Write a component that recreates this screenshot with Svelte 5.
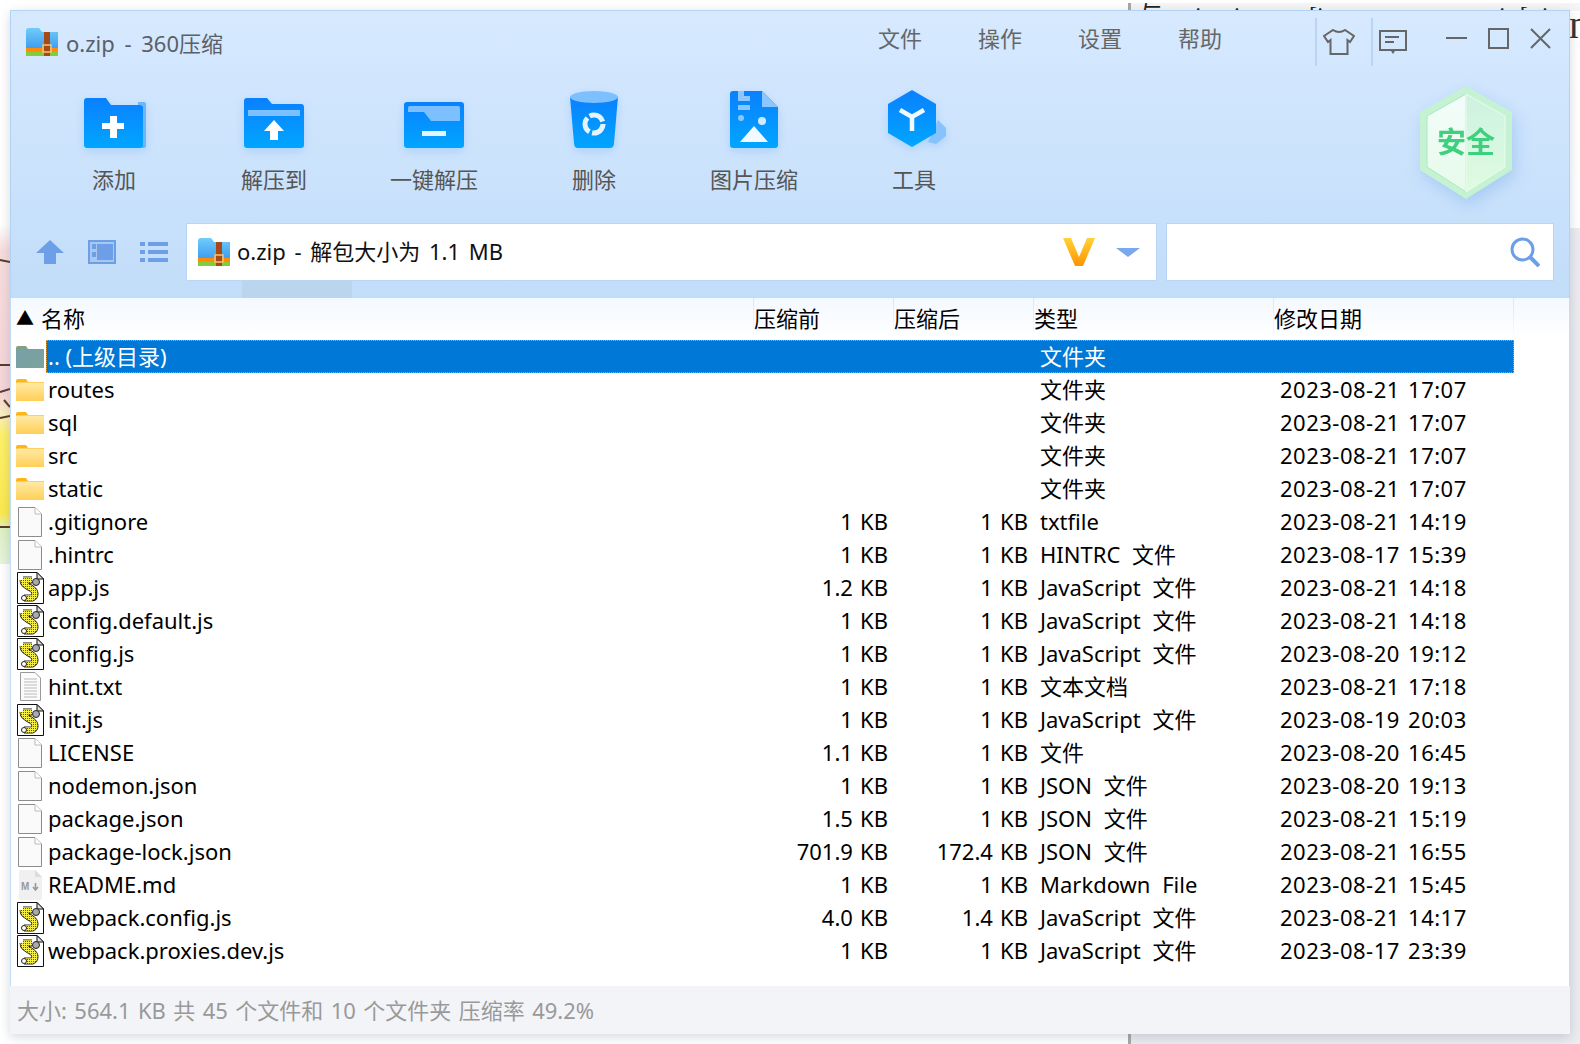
<script lang="ts">
	type Row = { kind: string; name: string; size?: string; packed?: string; type: string; date?: string };

	const rows: Row[] = [
		{ kind: 'up', name: '.. (上级目录)', type: '文件夹' },
		{ kind: 'folder', name: 'routes', type: '文件夹', date: '2023-08-21 17:07' },
		{ kind: 'folder', name: 'sql', type: '文件夹', date: '2023-08-21 17:07' },
		{ kind: 'folder', name: 'src', type: '文件夹', date: '2023-08-21 17:07' },
		{ kind: 'folder', name: 'static', type: '文件夹', date: '2023-08-21 17:07' },
		{ kind: 'file', name: '.gitignore', size: '1 KB', packed: '1 KB', type: 'txtfile', date: '2023-08-21 14:19' },
		{ kind: 'file', name: '.hintrc', size: '1 KB', packed: '1 KB', type: 'HINTRC 文件', date: '2023-08-17 15:39' },
		{ kind: 'js', name: 'app.js', size: '1.2 KB', packed: '1 KB', type: 'JavaScript 文件', date: '2023-08-21 14:18' },
		{ kind: 'js', name: 'config.default.js', size: '1 KB', packed: '1 KB', type: 'JavaScript 文件', date: '2023-08-21 14:18' },
		{ kind: 'js', name: 'config.js', size: '1 KB', packed: '1 KB', type: 'JavaScript 文件', date: '2023-08-20 19:12' },
		{ kind: 'txt', name: 'hint.txt', size: '1 KB', packed: '1 KB', type: '文本文档', date: '2023-08-21 17:18' },
		{ kind: 'js', name: 'init.js', size: '1 KB', packed: '1 KB', type: 'JavaScript 文件', date: '2023-08-19 20:03' },
		{ kind: 'file', name: 'LICENSE', size: '1.1 KB', packed: '1 KB', type: '文件', date: '2023-08-20 16:45' },
		{ kind: 'file', name: 'nodemon.json', size: '1 KB', packed: '1 KB', type: 'JSON 文件', date: '2023-08-20 19:13' },
		{ kind: 'file', name: 'package.json', size: '1.5 KB', packed: '1 KB', type: 'JSON 文件', date: '2023-08-21 15:19' },
		{ kind: 'file', name: 'package-lock.json', size: '701.9 KB', packed: '172.4 KB', type: 'JSON 文件', date: '2023-08-21 16:55' },
		{ kind: 'md', name: 'README.md', size: '1 KB', packed: '1 KB', type: 'Markdown File', date: '2023-08-21 15:45' },
		{ kind: 'js', name: 'webpack.config.js', size: '4.0 KB', packed: '1.4 KB', type: 'JavaScript 文件', date: '2023-08-21 14:17' },
		{ kind: 'js', name: 'webpack.proxies.dev.js', size: '1 KB', packed: '1 KB', type: 'JavaScript 文件', date: '2023-08-17 23:39' }
	];

	const tools = ['添加', '解压到', '一键解压', '删除', '图片压缩', '工具'];
</script>

{#snippet zipIcon()}
	<svg class="zip" viewBox="0 0 32 28" width="32" height="28">
		<path d="M0 3 Q0 0 3 0 H13 L16 4 H32 V20 H0 Z" fill="url(#zipBlue)" />
		<rect x="0" y="20" width="32" height="4" fill="#ff8a0c" />
		<rect x="0" y="24" width="32" height="4" fill="#84cc3a" />
		<rect x="18" y="4" width="6" height="24" fill="#a5481a" />
		<rect x="17" y="17" width="8" height="7" fill="none" stroke="#f5c66b" stroke-width="1.5" />
	</svg>
{/snippet}

{#snippet toolIcon(i: number)}
	{#if i === 0}
		<svg class="add" viewBox="0 0 62 50" width="62" height="50">
			<path d="M58 4 H60 Q62 4 62 6 V48 Q62 50 60 50 H54 V4 Z" fill="#6cb6fb" />
			<path d="M0 3 Q0 0 3 0 H22 L27 7 H55 Q59 7 59 10 V47 Q59 50 56 50 H3 Q0 50 0 47 Z" fill="url(#toolBlue)" />
			<path d="M26 25 V18 H33 V25 H40 V31 H33 V40 H26 V31 H18 V25 Z" fill="#fff" />
		</svg>
	{:else if i === 1}
		<svg viewBox="0 0 60 50" width="60" height="50">
			<path d="M0 3 Q0 0 3 0 H23 L28 6 H57 Q60 6 60 9 V47 Q60 50 57 50 H3 Q0 50 0 47 Z" fill="url(#toolBlue)" />
			<rect x="4" y="12" width="52" height="6" fill="#7cc0ff" />
			<path d="M30 22 L40 33 H34 V42 H26 V33 H20 Z" fill="#fff" />
		</svg>
	{:else if i === 2}
		<svg viewBox="0 0 60 50" width="60" height="50">
			<path d="M3 4 H57 Q60 4 60 7 V47 Q60 50 57 50 H3 Q0 50 0 47 V7 Q0 4 3 4 Z" fill="url(#toolBlue)" />
			<path d="M4 10 Q4 8 6 8 H54 Q56 8 56 10 V23 H27 L20 14 H4 Z" fill="#7cc0ff" />
			<rect x="18" y="33" width="24" height="5" fill="#e4f4ff" />
		</svg>
	{:else if i === 3}
		<svg class="bin" viewBox="0 0 48 58" width="48" height="58">
			<path d="M0 6 H48 L44 52 Q44 57 40 57 H8 Q4 57 4 52 Z" fill="url(#toolBlue)" />
			<ellipse cx="24" cy="6" rx="24" ry="6" fill="#7cc0ff" />
			<circle cx="24" cy="33" r="9" fill="none" stroke="#e4f4ff" stroke-width="5" stroke-dasharray="16 2.800" />
		</svg>
	{:else if i === 4}
		<svg viewBox="0 0 48 57" width="48" height="57">
			<path d="M3 0 H32 L48 16 V54 Q48 57 45 57 H3 Q0 57 0 54 V3 Q0 0 3 0 Z" fill="url(#toolBlue)" />
			<path d="M32 0 L48 16 H32 Z" fill="#8cc6ff" />
			<path d="M8 0 H14 V5 H20 V10 H14 V14 H20 V19 H8 V14 H14 V10 H8 V5 H8 Z" fill="#8cc6ff" />
			<circle cx="11" cy="27" r="3" fill="#8cc6ff" />
			<circle cx="32" cy="30" r="4" fill="#cfe9ff" />
			<path d="M10 51 L24 35 L38 51 Z" fill="#f2faff" />
		</svg>
	{:else}
		<svg class="cube" viewBox="0 0 58 58" width="58" height="58">
			<path d="M50 30 L58 38 V46 L48 54 L40 52 Z" fill="#86c2fb" />
			<path d="M24 0 L48 14 V43 L24 57 L0 43 V14 Z" fill="url(#toolBlue)" />
			<path d="M12 20 L24 27 L36 20 M24 27 V41" fill="none" stroke="#f2faff" stroke-width="4.5" />
		</svg>
	{/if}
{/snippet}

{#snippet fileIcon(kind: string)}
	{#if kind === 'folder' || kind === 'up'}
		<svg class="ico" viewBox="0 0 28 22" width="28" height="22">
			<path d="M0 2 Q0 0 2 0 H10 L12 3 H28 V22 H0 Z" fill={kind === 'up' ? '#82a085' : '#ffb515'} />
			<rect x="0" y="3.5" width="28" height="18.5" rx="1" fill={kind === 'up' ? 'url(#upBody)' : 'url(#folderBody)'} />
		</svg>
	{:else if kind === 'js'}
		<svg class="ico" viewBox="0 0 27 32" width="27" height="32">
			<path d="M.5 .5 H20 L26.5 7 V31.500 H.5 Z" fill="#fff" stroke="#111" />
			<path d="M20 .5 V7 H26.5 Z" fill="#ddd" stroke="#111" />
			<path d="M6 8 H15 M6 8 C6 13 11 14 15 17 C19 20 19 24 15 26 H7" fill="none" stroke="#222" stroke-width="7" />
			<path d="M6 8 H15 M6 8 C6 13 11 14 15 17 C19 20 19 24 15 26 H7" fill="none" stroke="url(#jsHatch)" stroke-width="5.4" />
			<circle cx="19" cy="10" r="3.5" fill="#aaa" stroke="#222" />
			<circle cx="7" cy="26" r="2.5" fill="#fff" stroke="#222" />
		</svg>
	{:else if kind === 'txt'}
		<svg class="ico" viewBox="0 0 21 29" width="21" height="29">
			<path d="M.5 .5 H15 L20.5 6 V28.5 H.5 Z" fill="#fbfbfb" stroke="#999" />
			<path d="M4 7 H17 M4 10 H17 M4 13 H17 M4 16 H17 M4 19 H17 M4 22 H17 M4 25 H17" stroke="#bbb" />
		</svg>
	{:else if kind === 'md'}
		<svg class="ico" viewBox="0 0 24 30" width="24" height="30">
			<path d="M1 2 Q1 0 3 0 H17 L24 7 V28 Q24 30 22 30 H3 Q1 30 1 28 Z" fill="#f0f0f0" />
			<path d="M17 0 L24 7 H17 Z" fill="#dcdcdc" />
			<text x="3" y="20" font-size="10" font-weight="700" fill="#999" font-family="Liberation Sans, sans-serif">M</text>
			<path d="M17.500 13 V19 M15 17 L17.500 20 L20 17" fill="none" stroke="#999" stroke-width="1.6" />
		</svg>
	{:else}
		<svg class="ico" viewBox="0 0 24 30" width="24" height="30">
			<path d="M.5 .5 H17 L23.5 7 V29.5 H.5 Z" fill="#fafafa" stroke="#8c8c8c" />
			<path d="M17 .5 V7 H23.5" fill="#fff" stroke="#bbb" />
		</svg>
	{/if}
{/snippet}

<div class="desktop">
	<svg class="art" viewBox="0 0 10 340" width="10" height="340">
		<defs>
			<linearGradient id="artFill" x1="0" y1="0" x2="0" y2="1">
				<stop offset="0" stop-color="#fff" />
				<stop offset="0.08" stop-color="#f7dcdc" />
				<stop offset="0.5" stop-color="#f5d5d8" />
				<stop offset="0.56" stop-color="#f9efc0" />
				<stop offset="0.62" stop-color="#fdf06a" />
				<stop offset="0.85" stop-color="#fbe94e" />
				<stop offset="0.9" stop-color="#dff0c6" />
				<stop offset="1" stop-color="#e6f4da" />
			</linearGradient>
		</defs>
		<rect width="10" height="340" fill="url(#artFill)" />
		<path d="M0 36 L10 38 M0 141 L10 141 M0 168 L10 165 M4 176 L10 183 M0 194 L10 192 M0 303 L10 303" stroke="#5a3a2a" stroke-width="2" fill="none" />
	</svg>
	<div class="doc">
		<span class="doc-text">与 i i</span>
		<span class="doc-text mid">[i</span>
		<span class="doc-text end">i [ i</span>
		<span class="doc-n">n</span>
	</div>

	<main class="window">
		<svg class="defs" width="0" height="0">
			<defs>
				<linearGradient id="zipBlue" x1="0" y1="0" x2="0" y2="1">
					<stop offset="0" stop-color="#70ccfa" />
					<stop offset="1" stop-color="#3f9ff0" />
				</linearGradient>
				<linearGradient id="toolBlue" x1="0" y1="0" x2="0" y2="1">
					<stop offset="0" stop-color="#0a80ff" />
					<stop offset="1" stop-color="#00a6ff" />
				</linearGradient>
				<linearGradient id="folderBody" x1="0" y1="0" x2="0" y2="1">
					<stop offset="0" stop-color="#ffeaa6" />
					<stop offset="1" stop-color="#ffcf58" />
				</linearGradient>
				<linearGradient id="upBody" x1="0" y1="0" x2="1" y2="1">
					<stop offset="0" stop-color="#78a0aa" />
					<stop offset="1" stop-color="#7ba29a" />
				</linearGradient>
				<linearGradient id="vOrange" x1="0" y1="0" x2="0" y2="1">
					<stop offset="0" stop-color="#ffd23a" />
					<stop offset="1" stop-color="#ff9400" />
				</linearGradient>
				<linearGradient id="shieldL" x1="0" y1="0" x2="0" y2="1">
					<stop offset="0" stop-color="#f4fcfb" />
					<stop offset="1" stop-color="#e6fbe9" />
				</linearGradient>
				<linearGradient id="shieldR" x1="0" y1="0" x2="0" y2="1">
					<stop offset="0" stop-color="#cdf2e0" />
					<stop offset="1" stop-color="#e0fbe0" />
				</linearGradient>
				<pattern id="jsHatch" width="2" height="2" patternUnits="userSpaceOnUse">
					<rect width="2" height="2" fill="#f6ee3c" />
					<rect width="1" height="1" fill="#5a5a20" />
				</pattern>
			</defs>
		</svg>

		<header class="head">
			<div class="titlebar">
				<div class="title">
					{@render zipIcon()}
					<span>o.zip - 360压缩</span>
				</div>
				<nav class="menu">
					<span>文件</span><span>操作</span><span>设置</span><span>帮助</span>
				</nav>
				<div class="tb-btn">
					<svg viewBox="0 0 32 26" width="32" height="26" fill="none" stroke="#666" stroke-width="2">
						<path d="M10 1 Q16 5 22 1 L31 7 L27 13 L24.500 11 V25 H7.500 V11 L5 13 L1 7 Z" />
					</svg>
				</div>
				<div class="tb-btn">
					<svg viewBox="0 0 28 24" width="28" height="24" fill="none" stroke="#666" stroke-width="2">
						<path d="M1 1 H27 V20 H1 Z M6 7 H20 M6 12 H15" />
						<path d="M12 21 H16 L14 24 Z" fill="#666" stroke="none" />
					</svg>
				</div>
				<div class="winctl">
					<svg viewBox="0 0 21 21" width="21" height="21" stroke="#666" stroke-width="2" fill="none"><path d="M0 10 H21" /></svg>
					<svg viewBox="0 0 21 21" width="21" height="21" stroke="#666" stroke-width="2" fill="none"><rect x="1" y="1" width="19" height="19" /></svg>
					<svg viewBox="0 0 21 21" width="21" height="21" stroke="#666" stroke-width="2" fill="none"><path d="M1 1 L20 20 M20 1 L1 20" /></svg>
				</div>
			</div>

			<div class="toolbar">
				{#each tools as label, i}
					<div class="tool">
						<div class="tool-ico">{@render toolIcon(i)}</div>
						<span>{label}</span>
					</div>
				{/each}
			</div>

			<div class="shield">
				<svg viewBox="0 0 92 113" width="92" height="113">
					<path d="M46 0 L92 26 V84 L46 113 L0 84 V26 Z" fill="#c4f2d2" />
					<path d="M46 8 L46 106 L7 81 V30 Z" fill="url(#shieldL)" stroke="#a8eac0" />
					<path d="M46 8 L85 30 V81 L46 106 Z" fill="url(#shieldR)" stroke="#e8fdee" />
				</svg>
				<b>安全</b>
			</div>

			<div class="addr-row">
				<div class="nav-icons">
					<svg viewBox="0 0 28 24" width="28" height="24"><path d="M14 0 L28 13 H20 V24 H8 V13 H0 Z" fill="#6d9fe8" /></svg>
					<svg viewBox="0 0 28 24" width="28" height="24">
						<rect x="1" y="1" width="26" height="22" fill="#a9c8f0" stroke="#6d9fe8" stroke-width="2" />
						<rect x="9" y="4" width="16" height="16" fill="#6d9fe8" />
						<rect x="4" y="4" width="4" height="5" fill="#6d9fe8" />
						<rect x="4" y="12" width="4" height="5" fill="#6d9fe8" />
					</svg>
					<svg viewBox="0 0 28 20" width="28" height="20" fill="#6d9fe8">
						<rect x="0" y="0" width="5" height="4" /><rect x="8" y="0" width="20" height="4" />
						<rect x="0" y="8" width="5" height="4" /><rect x="8" y="8" width="20" height="4" />
						<rect x="0" y="16" width="5" height="4" /><rect x="8" y="16" width="20" height="4" />
					</svg>
				</div>
				<div class="addr">
					{@render zipIcon()}
					<span class="addr-text">o.zip - 解包大小为 1.1 MB</span>
					<svg class="vip" viewBox="0 0 32 28" width="32" height="28"><path d="M0 0 H8 L16 19 L24 0 H32 L20 28 H12 Z" fill="url(#vOrange)" /></svg>
					<svg class="caret" viewBox="0 0 24 9" width="24" height="9"><path d="M0 0 H24 L12 9 Z" fill="#7aa7ee" /></svg>
				</div>
				<div class="search">
					<svg viewBox="0 0 30 30" width="30" height="30" fill="none" stroke="#6d9fe8">
						<circle cx="12.500" cy="12.500" r="10.500" stroke-width="3" />
						<path d="M20 20 L29 29" stroke-width="4" />
					</svg>
				</div>
			</div>
			<div class="strip"><div class="strip-thumb"></div></div>
		</header>

		<section class="list">
			<div class="cols">
				<div class="col-name"><span class="sort">▲</span>名称</div>
				<div class="col">压缩前</div>
				<div class="col">压缩后</div>
				<div class="col">类型</div>
				<div class="col">修改日期</div>
				<div class="col col-end"></div>
			</div>
			{#each rows as row}
				<div class="row" class:sel={row.kind === 'up'}>
					<div class="icon-cell">{@render fileIcon(row.kind)}</div>
					<div class="cells">
						<span class="name">{row.name}</span>
						<span class="num">{row.size ?? ''}</span>
						<span class="num">{row.packed ?? ''}</span>
						<span class="type">{row.type}</span>
						<span class="date">{row.date ?? ''}</span>
					</div>
				</div>
			{/each}
		</section>

		<footer class="status">大小: 564.1 KB 共 45 个文件和 10 个文件夹 压缩率 49.2%</footer>
	</main>
</div>

<style>
	:global(body) {
		margin: 0;
		background: #fff;
	}

	.desktop {
		position: relative;
		width: 1580px;
		height: 1044px;
		overflow: hidden;
		padding: 10px 0 0 10px;
		box-sizing: border-box;
		font-family: 'Noto Sans', 'Noto Sans CJK SC', sans-serif;
		font-size: 22px;
		word-spacing: 3px;
	}

	/* what shows behind the window */
	.art {
		position: absolute;
		left: 0;
		top: 224px;
	}

	.doc {
		position: absolute;
		left: 1128px;
		top: 3px;
		width: 452px;
		height: 1041px;
		background: linear-gradient(#f5f5f5 8px, #fff 8px, #fff 225px, #ebebf0 225px);
		border-left: 3px solid #a8a8a8;
		overflow: hidden;
		box-sizing: border-box;
	}

	.doc-text {
		position: absolute;
		left: 8px;
		top: 0;
		font-family: 'Liberation Serif', 'Noto Sans CJK SC', serif;
		font-size: 24px;
		line-height: 24px;
		color: #222;
		white-space: nowrap;
		word-spacing: 26px;
	}

	.doc-text.mid {
		left: 178px;
	}

	.doc-text.end {
		left: 368px;
		word-spacing: 8px;
	}

	.doc-n {
		position: absolute;
		left: 438px;
		top: 2px;
		font-family: 'Liberation Serif', serif;
		font-size: 40px;
		line-height: 40px;
		color: #333;
	}

	.window {
		position: relative;
		width: 1560px;
		height: 1024px;
		display: flex;
		flex-direction: column;
		box-shadow: 0 3px 10px rgba(70, 80, 110, 0.22);
		background: #fff;
	}

	.defs {
		position: absolute;
	}

	.head {
		position: relative;
		background: linear-gradient(#d6e9ff, #c2ddf9);
		border: 1px solid #b3d3f5;
		border-bottom: 0;
		display: flex;
		flex-direction: column;
	}

	.titlebar {
		height: 84px;
		display: flex;
		align-items: flex-start;
		padding: 7px 18px 0 15px;
		box-sizing: border-box;
	}

	.title {
		display: flex;
		align-items: center;
		gap: 8px;
		margin-top: 10px;
		color: #5b6068;
		flex: 1;
		height: 28px;
		word-spacing: 4px;
	}

	.menu {
		display: flex;
		gap: 56px;
		color: #666;
		line-height: 30px;
		margin: 5px 93px 0 0;
	}

	.tb-btn {
		width: 54px;
		height: 48px;
		border-left: 2px solid #b9d5f3;
		display: flex;
		align-items: center;
		padding-left: 6px;
		box-sizing: content-box;
		margin-right: -6px;
	}

	.winctl {
		display: flex;
		gap: 21px;
		margin: 10px 0 0 19px;
	}

	.toolbar {
		height: 128px;
		display: flex;
		padding-left: 23px;
	}

	.tool {
		width: 160px;
		display: flex;
		flex-direction: column;
		align-items: center;
		color: #555;
		line-height: 30px;
	}

	.tool-ico {
		height: 69px;
		display: flex;
		align-items: flex-end;
	}

	.tool-ico svg {
		display: block;
		margin-bottom: 16px;
		filter: drop-shadow(0 3px 4px rgba(20, 130, 250, 0.18));
	}

	.tool-ico svg.add {
		margin-left: 2px;
	}

	.tool-ico svg.bin {
		margin-bottom: 15px;
	}

	.tool-ico svg.cube {
		margin-left: 6px;
	}

	.shield {
		position: absolute;
		left: 1409px;
		top: 75px;
		width: 92px;
		height: 113px;
		filter: drop-shadow(3px 6px 8px rgba(90, 150, 230, 0.3));
	}

	.shield b {
		position: absolute;
		left: 0;
		right: 0;
		top: 35px;
		text-align: center;
		color: #3dd07e;
		font-size: 29px;
		line-height: 38px;
		word-spacing: 0;
		font-family: 'Noto Sans CJK SC', sans-serif;
	}

	.addr-row {
		height: 58px;
		display: flex;
		padding-left: 25px;
	}

	.nav-icons {
		width: 150px;
		display: flex;
		align-items: center;
		gap: 24px;
	}

	.addr,
	.search {
		background: #fff;
		border: 1px solid #b9d6f6;
		box-sizing: border-box;
		display: flex;
		align-items: center;
	}

	.addr {
		width: 971px;
		padding-left: 11px;
	}

	.addr-text {
		margin-left: 7px;
		margin-top: -4px;
		color: #111;
		flex: 1;
		word-spacing: 3px;
	}

	.caret {
		margin: 0 16px 0 21px;
	}

	.search {
		width: 388px;
		margin-left: 9px;
		justify-content: flex-end;
		padding-right: 13px;
	}

	.strip {
		height: 17px;
		padding-left: 231px;
	}

	.strip-thumb {
		width: 110px;
		height: 100%;
		background: #bcd5ef;
	}

	.list {
		flex: 1;
		color: #000;
		background: #fff;
		border-left: 1px solid #c4dcf6;
		border-right: 1px solid #c4dcf6;
	}

	.cols {
		height: 42px;
		display: grid;
		grid-template-columns: 743px 140px 140px 240px 240px 1fr;
		background: linear-gradient(#f4f9ff, #fff);
	}

	.col-name,
	.col {
		display: flex;
		align-items: center;
		height: 42px;
		padding-bottom: 4px;
		box-sizing: border-box;
	}

	.col-name {
		padding-left: 5px;
	}

	.sort {
		width: 25px;
		font-size: 18px;
	}

	.col {
		border-left: 1px solid #d9e8fa;
		border-image: linear-gradient(#d2e5fb, #fff) 1;
		margin-left: -1px;
	}

	.row {
		height: 33px;
		display: flex;
		align-items: stretch;
		line-height: 33px;
		white-space: nowrap;
	}

	.icon-cell {
		width: 35px;
		flex: none;
		display: flex;
		align-items: center;
		justify-content: center;
		padding-left: 3px;
		box-sizing: border-box;
	}

	.ico {
		display: block;
	}

	.cells {
		width: 1468px;
		flex: none;
		display: grid;
		grid-template-columns: 708px 134px 140px 239px 1fr;
		box-sizing: border-box;
	}

	.sel .cells {
		background: #0078d7;
		color: #fff;
		outline: 1px dotted #e0a040;
		outline-offset: -1px;
	}

	.name {
		padding-left: 2px;
		word-spacing: 0;
	}

	.num {
		text-align: right;
		word-spacing: 1.500px;
	}

	.type {
		padding-left: 12px;
		word-spacing: 6px;
	}

	.date {
		padding-left: 13px;
		letter-spacing: 0.5px;
		word-spacing: 2px;
	}

	.status {
		height: 48px;
		background: #f3f4f8;
		color: #999;
		line-height: 48px;
		padding-left: 7px;
		word-spacing: 1.700px;
	}
</style>
